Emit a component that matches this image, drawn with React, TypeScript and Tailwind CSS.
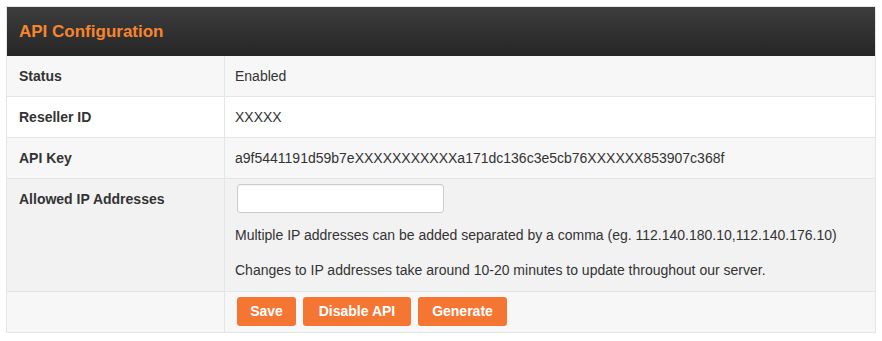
import React from "react";

const font = { fontFamily: '"Liberation Sans", Arial, Helvetica, sans-serif' };

function Row({
  label,
  bg,
  last,
  children,
  rightClass = "py-[10px]",
}: {
  label?: string;
  bg: string;
  last?: boolean;
  children: React.ReactNode;
  rightClass?: string;
}) {
  return (
    <div
      className={`grid grid-cols-[218px_1fr] ${bg} ${last ? "" : "border-b border-[#e1e6ea]"}`}
    >
      <div className="border-r border-[#e1e6ea] pl-[12px] py-[10px] text-[14px] leading-[20px] font-bold text-[#333]">
        {label}
      </div>
      <div className={`pl-[10px] pr-[10px] text-[14px] leading-[20px] text-[#333] ${rightClass}`}>
        {children}
      </div>
    </div>
  );
}

function OrangeButton({ width, children }: { width: string; children: React.ReactNode }) {
  return (
    <button
      className={`h-[29px] ${width} rounded-[3px] bg-[#f47632] text-center text-[14px] font-bold leading-[29px] text-white`}
    >
      {children}
    </button>
  );
}

export default function App() {
  return (
    <div className="bg-white px-[6px] pt-[6px] pb-[7px]" style={font}>
      <div className="border border-[#e1e6ea]">
        <div className="flex h-[49px] items-center bg-gradient-to-b from-[#3d3d3d] to-[#262626] pl-[12px]">
          <span className="text-[17px] font-bold text-[#f7852d]">API Configuration</span>
        </div>
        <Row label="Status" bg="bg-[#f7f7f7]">
          Enabled
        </Row>
        <Row label="Reseller ID" bg="bg-white">
          XXXXX
        </Row>
        <Row label="API Key" bg="bg-[#f7f7f7]">
          a9f5441191d59b7eXXXXXXXXXXXa171dc136c3e5cb76XXXXXX853907c368f
        </Row>
        <Row label="Allowed IP Addresses" bg="bg-[#f2f2f2]" rightClass="pt-[5px] pb-[11px]">
          <input
            type="text"
            className="ml-[2px] block h-[29px] w-[207px] rounded-[3px] border border-[#cccccc] bg-white shadow-[inset_0_1px_1px_rgba(0,0,0,0.06)] outline-none"
          />
          <p className="mt-[12px]">
            Multiple IP addresses can be added separated by a comma (eg. 112.140.180.10,112.140.176.10)
          </p>
          <p className="mt-[15px]">
            Changes to IP addresses take around 10-20 minutes to update throughout our server.
          </p>
        </Row>
        <Row bg="bg-[#f7f7f7]" last rightClass="pt-[5px] pb-[6px]">
          <div className="ml-[2px] flex gap-[7px]">
            <OrangeButton width="w-[59px]">Save</OrangeButton>
            <OrangeButton width="w-[108px]">Disable API</OrangeButton>
            <OrangeButton width="w-[89px]">Generate</OrangeButton>
          </div>
        </Row>
      </div>
    </div>
  );
}
